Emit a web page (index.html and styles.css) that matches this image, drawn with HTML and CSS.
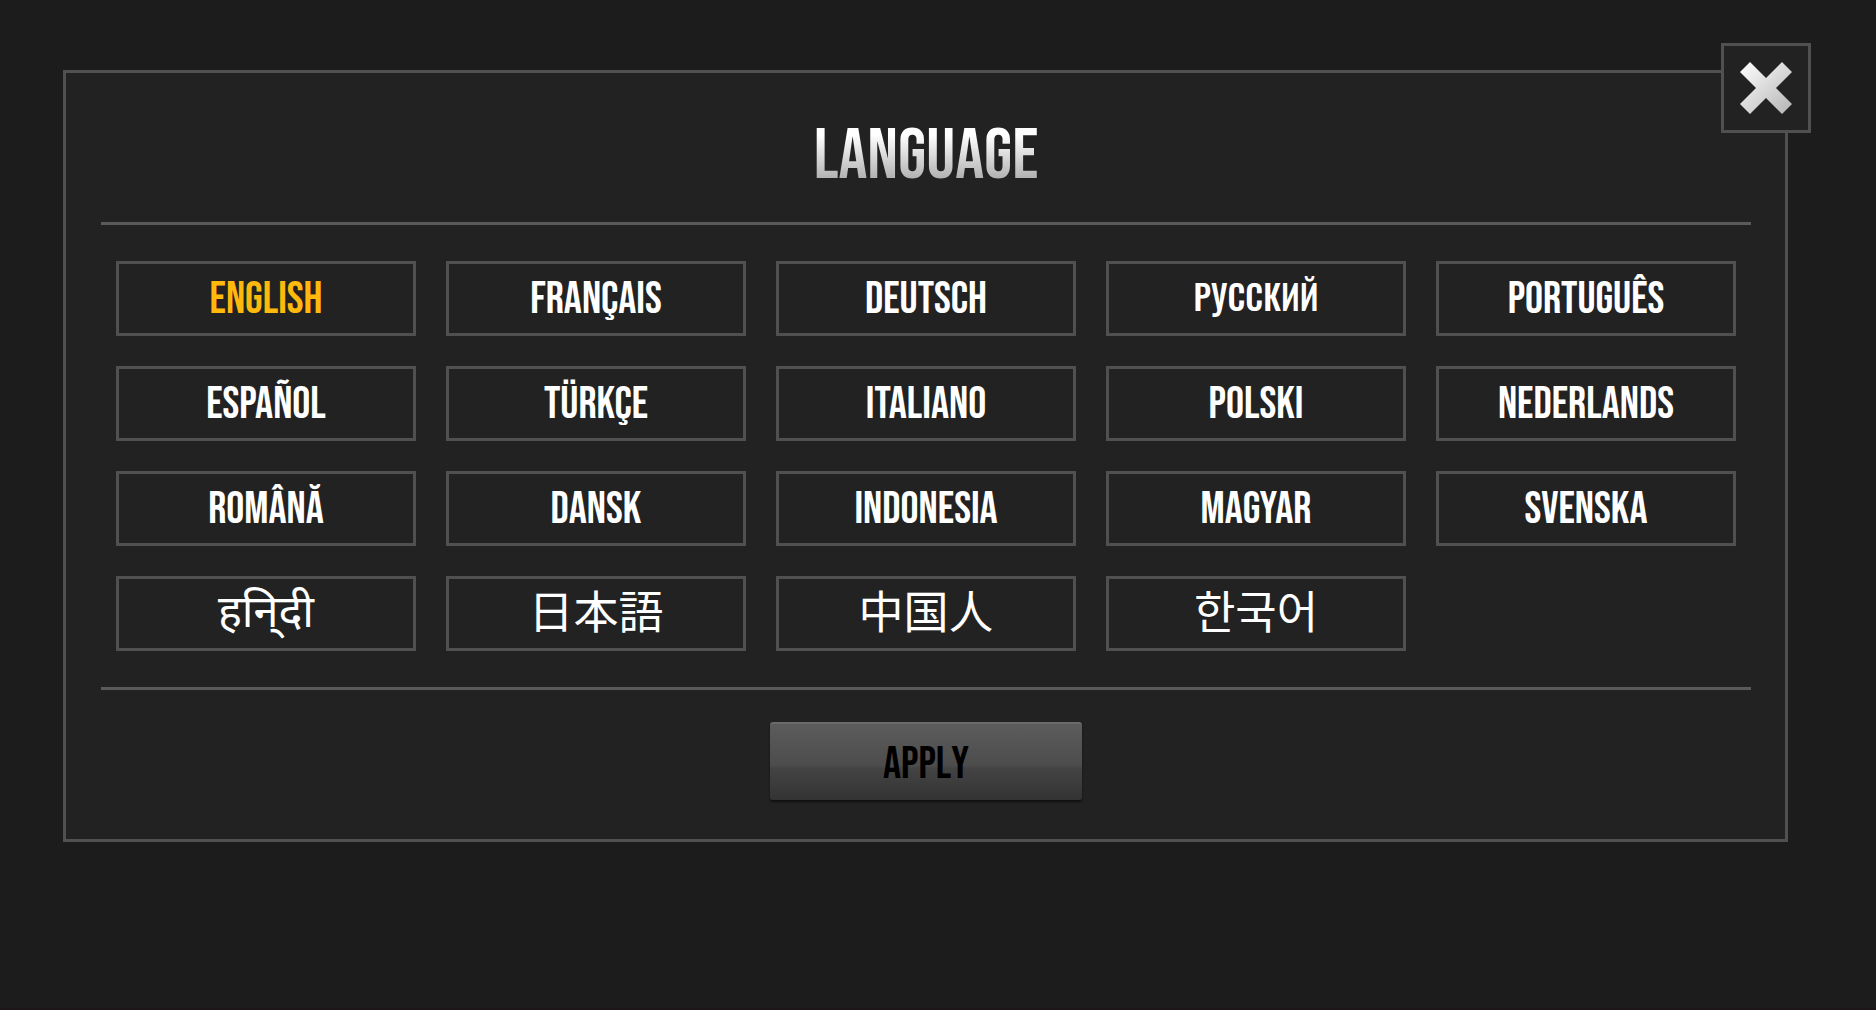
FILE: index.html
```html
<!DOCTYPE html>
<html lang="en">
<head>
    <meta charset="UTF-8">
    <meta name="viewport" content="width=device-width, initial-scale=1.0">
    <title>Language</title>
    <link rel="stylesheet" href="styles.css">
</head>
<body>
    <main class="panel">
        <button type="button" class="close" aria-label="Close">
            <svg viewBox="0 0 52 52" aria-hidden="true">
                <defs>
                    <linearGradient id="silver" x1="0" y1="0" x2="1" y2="1">
                        <stop offset="0" stop-color="#fff"/>
                        <stop offset="1" stop-color="#b4b4b4"/>
                    </linearGradient>
                </defs>
                <path fill="url(#silver)" d="M10 0 26 16 42 0 52 10 36 26 52 42 42 52 26 36 10 52 0 42 16 26 0 10Z"/>
            </svg>
        </button>

        <h1>Language</h1>

        <div class="languages">
            <button type="button" class="language selected" lang="en">ENGLISH</button>
            <button type="button" class="language" lang="fr">FRANÇAIS</button>
            <button type="button" class="language" lang="de">DEUTSCH</button>
            <button type="button" class="language cyrillic" lang="ru">РУССКИЙ</button>
            <button type="button" class="language" lang="pt">PORTUGUÊS</button>
            <button type="button" class="language" lang="es">ESPAÑOL</button>
            <button type="button" class="language" lang="tr">TÜRKÇE</button>
            <button type="button" class="language" lang="it">ITALIANO</button>
            <button type="button" class="language" lang="pl">POLSKI</button>
            <button type="button" class="language" lang="nl">NEDERLANDS</button>
            <button type="button" class="language" lang="ro">ROMÂNĂ</button>
            <button type="button" class="language" lang="da">DANSK</button>
            <button type="button" class="language" lang="id">INDONESIA</button>
            <button type="button" class="language" lang="hu">MAGYAR</button>
            <button type="button" class="language" lang="sv">SVENSKA</button>
            <button type="button" class="language hindi" lang="hi">हनि्दी</button>
            <button type="button" class="language cjk" lang="ja">日本語</button>
            <button type="button" class="language cjk" lang="zh">中国人</button>
            <button type="button" class="language cjk" lang="ko">한국어</button>
        </div>

        <button type="button" class="apply">APPLY</button>
    </main>
</body>
</html>
```
FILE: styles.css
```css
* {
    box-sizing: border-box;
}
body {
    margin: 0;
    min-height: 100vh;
    padding: 70px 88px 0 63px;
    background-color: #1c1c1c;
    border-bottom: 2px solid #1c1519;
    font-family: "Bebas Neue", "Roboto Condensed", "Liberation Sans Narrow", "Liberation Sans", sans-serif;
}
button {
    font-family: inherit;
    cursor: pointer;
}
.panel {
    position: relative;
    display: flex;
    flex-direction: column;
    padding: 0 34px 39px 35px;
    border: 3px solid #505050;
    background-color: #222;
}
h1 {
    align-self: center;
    margin: 47px 0 28px;
    font-size: 72px;
    font-weight: normal;
    font-kerning: none;
    line-height: 74px;
    text-transform: uppercase;
    color: transparent;
    background: linear-gradient(#fff 20%, #aaa 85%);
    background-clip: text;
    -webkit-background-clip: text;
}
.close {
    position: absolute;
    top: -30px;
    right: -26px;
    width: 90px;
    height: 90px;
    padding: 16px;
    border: 3px solid #505050;
    background-color: #222;
}
.close svg {
    display: block;
    width: 52px;
    height: 52px;
}
.languages {
    display: grid;
    grid-template-columns: repeat(5, 1fr);
    gap: 30px;
    padding: 36px 15px;
    border-top: 3px solid #5a5a5a;
    border-bottom: 3px solid #5a5a5a;
}
.language {
    height: 75px;
    padding: 2px 0 0;
    border: 3px solid #505050;
    background-color: #222;
    color: #fff;
    font-size: 45px;
}
.selected {
    color: #ffb80c;
}
.cyrillic {
    padding: 0 0 4px;
    font-family: "Oswald", "Roboto Condensed", "Liberation Sans Narrow", sans-serif;
    font-size: 33px;
    font-weight: 500;
}
.hindi,
.cjk {
    padding: 0 0 8px;
    font-family: "Noto Sans", "Noto Sans Devanagari", sans-serif;
    font-size: 45px;
    line-height: 60px;
}
.cjk {
    font-family: "Noto Sans CJK JP", sans-serif;
}
.apply {
    align-self: center;
    width: 312px;
    height: 78px;
    margin-top: 32px;
    padding: 4px 0 0;
    border: 0;
    border-top: 2px solid #6a6a6a;
    border-radius: 3px;
    background: linear-gradient(#5c5c5c, #4c4c4c 55%, #444 58%, #333);
    box-shadow: 0 2px 2px #111;
    color: #000;
    font-size: 45px;
    font-kerning: none;
}
```
